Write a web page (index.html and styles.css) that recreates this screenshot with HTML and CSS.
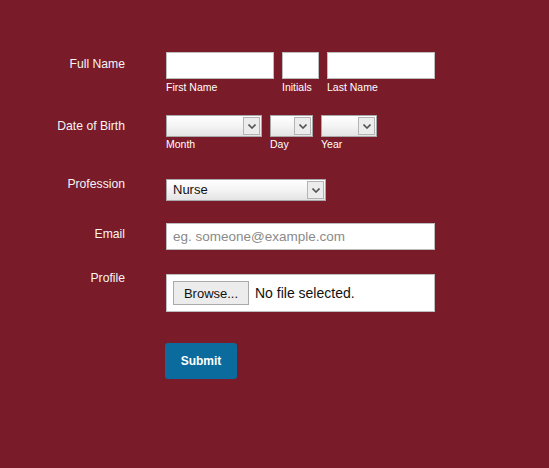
FILE: index.html
```html
<!DOCTYPE html>
<html>
<head>
<meta charset="utf-8">
<link rel="stylesheet" href="styles.css">
</head>
<body>
<form class="form">
  <div class="row r1">
    <div class="label l1">Full Name</div>
    <div class="fields">
      <div class="field"><input class="text w-first" type="text"><span class="sub">First Name</span></div>
      <div class="field"><input class="text w-init" type="text"><span class="sub">Initials</span></div>
      <div class="field"><input class="text w-last" type="text"><span class="sub">Last Name</span></div>
    </div>
  </div>
  <div class="row r2">
    <div class="label l2">Date of Birth</div>
    <div class="fields">
      <div class="field"><div class="select w-month"><span class="sel-val"></span><span class="arrow"><svg width="8" height="5" viewBox="0 0 8 5"><path d="M0.5 0.5 L4 4 L7.5 0.5" fill="none" stroke="#555" stroke-width="1.6"/></svg></span></div><span class="sub">Month</span></div>
      <div class="field"><div class="select w-day"><span class="sel-val"></span><span class="arrow"><svg width="8" height="5" viewBox="0 0 8 5"><path d="M0.5 0.5 L4 4 L7.5 0.5" fill="none" stroke="#555" stroke-width="1.6"/></svg></span></div><span class="sub">Day</span></div>
      <div class="field"><div class="select w-year"><span class="sel-val"></span><span class="arrow"><svg width="8" height="5" viewBox="0 0 8 5"><path d="M0.5 0.5 L4 4 L7.5 0.5" fill="none" stroke="#555" stroke-width="1.6"/></svg></span></div><span class="sub">Year</span></div>
    </div>
  </div>
  <div class="row r3">
    <div class="label l3">Profession</div>
    <div class="fields">
      <div class="select w-prof"><span class="sel-val">Nurse</span><span class="arrow"><svg width="8" height="5" viewBox="0 0 8 5"><path d="M0.5 0.5 L4 4 L7.5 0.5" fill="none" stroke="#555" stroke-width="1.6"/></svg></span></div>
    </div>
  </div>
  <div class="row r4">
    <div class="label l4">Email</div>
    <div class="fields">
      <input class="text w-email" type="text" placeholder="eg. someone@example.com">
    </div>
  </div>
  <div class="row r5">
    <div class="label l5">Profile</div>
    <div class="fields">
      <div class="file"><button class="browse" type="button">Browse...</button><span class="nofile">No file selected.</span></div>
    </div>
  </div>
  <div class="row r6">
    <div class="label"></div>
    <div class="fields">
      <button class="submit" type="button">Submit</button>
    </div>
  </div>
</form>
</body>
</html>
```
FILE: styles.css
```css
html, body {
  margin: 0;
  padding: 0;
  background: #7a1b2a;
  height: 100%;
}
body {
  font-family: "Liberation Sans", Arial, sans-serif;
  color: #f4f4f4;
}
.form {
  padding-top: 52px;
  display: flex;
  flex-direction: column;
}
.row {
  display: grid;
  grid-template-columns: 125px 1fr;
  column-gap: 41px;
  align-items: start;
}
.r1 { margin-bottom: 22px; }
.r2 { margin-bottom: 29px; }
.r3 { margin-bottom: 22px; }
.r4 { margin-bottom: 24px; }
.r5 { margin-bottom: 31px; }
.label {
  text-align: right;
  font-size: 12.2px;
  line-height: 14px;
  color: #f4f4f4;
}
.l1 { margin-top: 5px; }
.l2 { margin-top: 4px; }
.l3 { margin-top: -2px; }
.l4 { margin-top: 4px; }
.l5 { margin-top: -3px; }
.fields {
  display: flex;
  gap: 8px;
  align-items: flex-start;
}
.field {
  display: flex;
  flex-direction: column;
}
.sub {
  font-size: 10.5px;
  line-height: 12px;
  color: #ffffff;
  margin-top: 1px;
}
.r1 .sub { margin-top: 2px; }
.text {
  box-sizing: border-box;
  height: 27px;
  margin: 0;
  border: 1px solid #bdbdbd;
  background: #ffffff;
  font-family: "Liberation Sans", Arial, sans-serif;
  font-size: 13.5px;
  padding: 0 6px;
  outline: none;
}
.text::placeholder { color: #8a8a8a; }
.w-first { width: 108px; }
.w-init { width: 37px; }
.w-last { width: 108px; }
.w-email { width: 269px; }
.select {
  box-sizing: border-box;
  height: 22px;
  display: flex;
  align-items: stretch;
  border: 1px solid #a8a8a8;
  background: linear-gradient(#ffffff, #f4f4f4 50%, #e4e4e4);
  padding: 1px;
}
.sel-val {
  flex: 1;
  font-size: 13px;
  line-height: 18px;
  color: #111;
  padding-left: 5px;
}
.arrow {
  box-sizing: border-box;
  width: 17px;
  border: 1px solid #b4b4b4;
  background: #ececec;
  display: flex;
  align-items: center;
  justify-content: center;
}
.w-month { width: 96px; }
.w-day { width: 43px; }
.w-year { width: 56px; }
.w-prof { width: 160px; }
.file {
  box-sizing: border-box;
  width: 269px;
  height: 38px;
  background: #fff;
  border: 1px solid #bdbdbd;
  display: flex;
  align-items: center;
  padding-left: 6px;
  gap: 6px;
}
.browse {
  box-sizing: border-box;
  width: 76px;
  height: 24px;
  margin: 0;
  border: 1px solid #a9a9a9;
  background: #ececec;
  font-family: "Liberation Sans", Arial, sans-serif;
  font-size: 13px;
  color: #111;
  padding: 0;
}
.nofile {
  font-size: 14px;
  color: #111;
}
.submit {
  box-sizing: border-box;
  margin-left: -1px;
  width: 72px;
  height: 36px;
  border: none;
  border-radius: 3px;
  background: #0b6b9c;
  color: #fff;
  font-family: "Liberation Sans", Arial, sans-serif;
  font-weight: bold;
  font-size: 12px;
  padding: 0;
}
```
